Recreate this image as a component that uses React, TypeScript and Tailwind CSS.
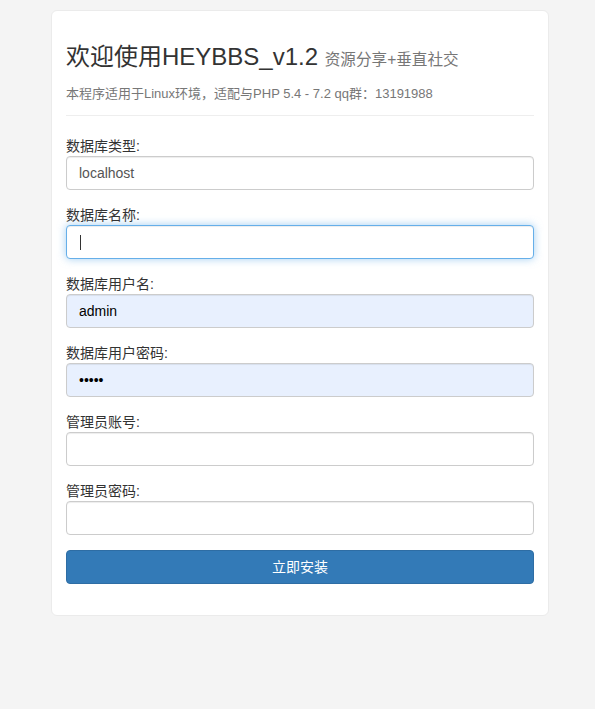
import React from 'react';

const font = { fontFamily: '"Liberation Sans", Arial, "Noto Sans CJK SC", sans-serif' };

interface FieldProps {
  label: string;
  children: React.ReactNode;
}

const Field: React.FC<FieldProps> = ({ label, children }) => (
  <div className="mb-[15px]">
    <div className="h-[20px] text-[14px] leading-[20px] text-[#333]">{label}</div>
    {children}
  </div>
);

const inputBase =
  'block h-[34px] w-full rounded-[4px] border border-[#ccc] px-[12px] text-[14px] leading-[20px] shadow-[inset_0_1px_1px_rgba(0,0,0,0.075)] outline-none';

export default function App() {
  return (
    <div className="min-h-[709px] bg-[#f4f4f4] pt-[10px]" style={font}>
      <div className="ml-[51px] w-[498px] rounded-[6px] border border-[#ebebeb] bg-white px-[14px] pb-[31px] pt-[33px]">
        <h1 className="text-[24px] leading-[26px] text-[#333]">
          欢迎使用HEYBBS_v1.2 <small className="text-[15.6px] text-[#777]">资源分享+垂直社交</small>
        </h1>
        <p className="mt-[11px] text-[13px] leading-[20px] text-[#777]">
          本程序适用于Linux环境，适配与PHP 5.4 - 7.2 qq群：13191988
        </p>
        <div className="mt-[11px] mb-[20px] border-t border-[#eee]" />

        <Field label="数据库类型:">
          <input className={`${inputBase} bg-white text-[#555]`} defaultValue="localhost" readOnly />
        </Field>
        <Field label="数据库名称:">
          <div className="flex h-[34px] w-full items-center rounded-[4px] border border-[#66afe9] bg-white px-[13px] shadow-[inset_0_1px_1px_rgba(0,0,0,0.075),0_0_8px_rgba(102,175,233,0.6)]">
            <span className="h-[15px] w-px bg-[#333]" />
          </div>
        </Field>
        <Field label="数据库用户名:">
          <input className={`${inputBase} bg-[#e8f0fe] text-black`} defaultValue="admin" readOnly />
        </Field>
        <Field label="数据库用户密码:">
          <input className={`${inputBase} bg-[#e8f0fe] text-black`} type="password" defaultValue="admin" readOnly />
        </Field>
        <Field label="管理员账号:">
          <input className={`${inputBase} bg-white text-[#555]`} readOnly />
        </Field>
        <Field label="管理员密码:">
          <input className={`${inputBase} bg-white text-[#555]`} type="password" readOnly />
        </Field>

        <button className="block h-[34px] w-full rounded-[4px] border border-[#2e6da4] bg-[#337ab7] text-[14px] text-white">
          立即安装
        </button>
      </div>
    </div>
  );
}
